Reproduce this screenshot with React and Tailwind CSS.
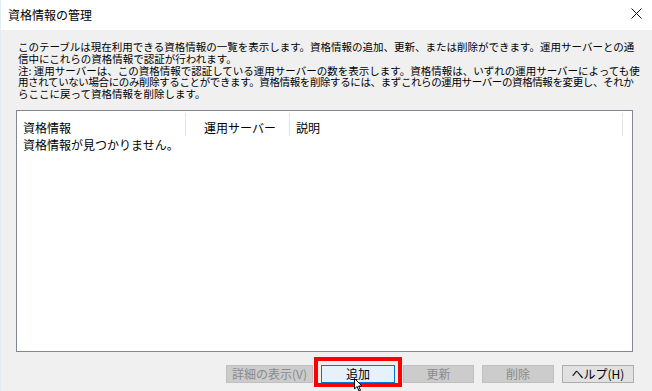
const FONT = { fontFamily: '"Noto Sans CJK JP", "Noto Sans", sans-serif' }

const LINES = [
  ['このテーブルは現在利用できる資格情報の一覧を表示します。資格情報の追加、更新、または削除ができます。運用サーバーとの通', 'w-[615px] [text-align-last:justify]'],
  ['信中にこれらの資格情報で認証が行われます。', ''],
  ['注: 運用サーバーは、この資格情報で認証している運用サーバーの数を表示します。資格情報は、いずれの運用サーバーによっても使', 'w-[615px] [text-align-last:justify]'],
  ['用されていない場合にのみ削除することができます。資格情報を削除するには、まずこれらの運用サーバーの資格情報を変更し、それか', 'w-[615px] tracking-[-0.75px] [text-align-last:justify]'],
  ['らここに戻って資格情報を削除します。', ''],
]

function Button({ label, width, variant, children }) {
  const styles = {
    disabled: 'bg-[#cccccc] border-[#bfbfbf] text-[#8a8a8a]',
    focused: 'bg-[#e5f1fb] border-[#0078d7] text-black',
    normal: 'bg-[#e1e1e1] border-[#adadad] text-black',
  }
  return (
    <div
      className={`relative h-[18px] border flex items-center justify-center text-[12px] leading-none ${styles[variant]}`}
      style={{ width }}
    >
      {label}
      {children}
    </div>
  )
}

export default function App() {
  return (
    <div className="w-[652px] h-[391px] bg-[#f0f0f0] flex flex-col overflow-hidden relative border-l border-[#e4ecf4]" style={FONT}>
      {/* Title bar */}
      <div className="h-[30px] bg-white flex items-center justify-between pl-[7px] pr-[10px] shrink-0">
        <span className="text-[12px] text-black">資格情報の管理</span>
        <svg width="11" height="11" viewBox="0 0 11 11" className="mt-[-4px]">
          <path d="M0.5 0.5 L10.5 10.5 M10.5 0.5 L0.5 10.5" stroke="#111" strokeWidth="1" />
        </svg>
      </div>

      {/* Description */}
      <div className="pl-[17px] pt-[11px] text-[10.5px] leading-[11.8px] text-black whitespace-nowrap">
        {LINES.map(([l, cls], i) => (
          <div key={i} className={cls}>{l}</div>
        ))}
      </div>

      {/* Table */}
      <div className="ml-[15px] mt-[10px] w-[617px] h-[242px] bg-white border border-[#828790] shrink-0">
        <div className="flex h-[25px] text-[12px] text-black">
          <div className="w-[169px] border-r border-[#e5e5e5] pl-[6px] pt-[6px] mt-[2px]">資格情報</div>
          <div className="w-[104px] border-r border-[#e5e5e5] pl-[18px] pt-[6px] mt-[2px]">運用サーバー</div>
          <div className="w-[333px] border-r border-[#e5e5e5] pl-[6px] pt-[6px] mt-[2px]">説明</div>
        </div>
        <div className="pl-[6px] pt-[1px] text-[12px] text-black leading-[16px]">資格情報が見つかりません。</div>
      </div>

      {/* Buttons */}
      <div className="flex justify-end gap-[8px] pr-[18px] mt-[13px]">
        <Button label="詳細の表示(V)" width={87} variant="disabled" />
        <Button label="追加" width={74} variant="focused">
          <div className="absolute left-[-8px] right-[-8px] top-[-9px] bottom-[-5px] border-[4px] border-[#ff0000]" />
          <svg width="10" height="14" viewBox="0 0 10 14" className="absolute left-[32px] top-[12px]">
            <path d="M0.5 0.5 L0.5 11 L3 8.5 L5 13 L6.5 12.3 L4.6 8 L8 8 Z" fill="#fff" stroke="#000" strokeWidth="1" />
          </svg>
        </Button>
        <Button label="更新" width={71} variant="disabled" />
        <Button label="削除" width={72} variant="disabled" />
        <Button label="ヘルプ(H)" width={72} variant="normal" />
      </div>
    </div>
  )
}
